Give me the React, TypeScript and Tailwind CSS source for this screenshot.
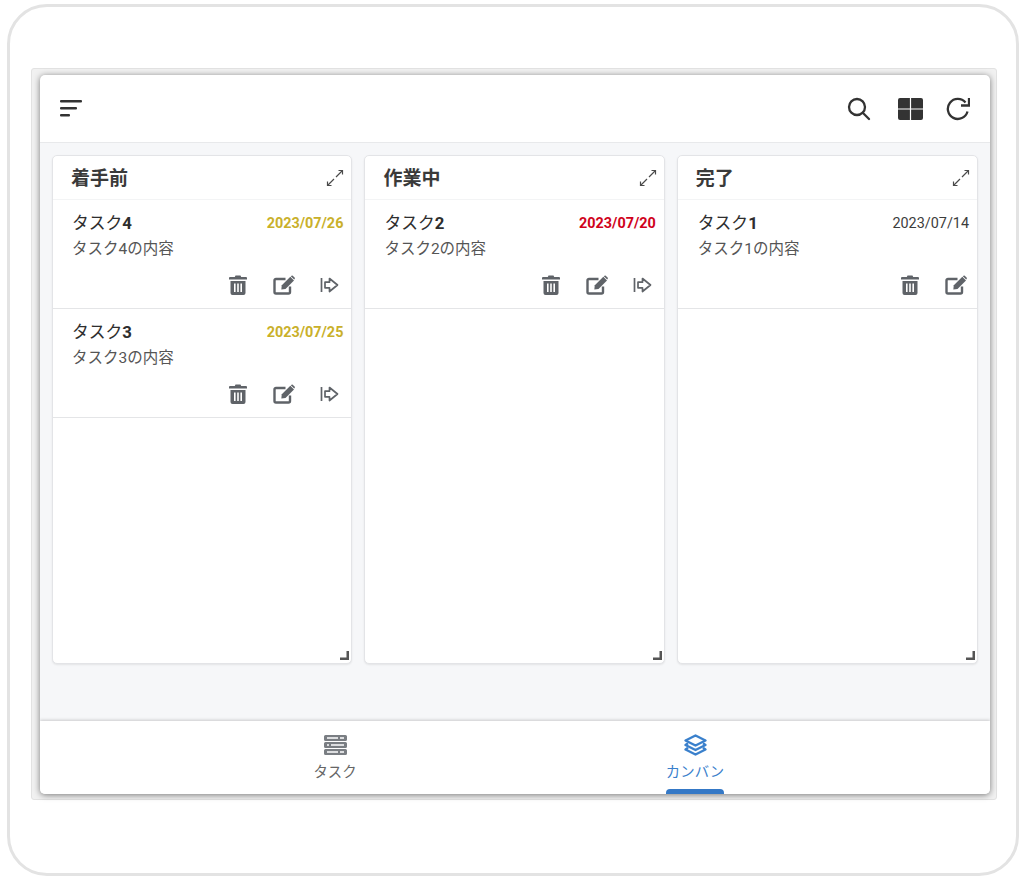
import React from 'react';

type Task = { title: string; body: string; date: string; dateClass: string };

const columns: { title: string; last?: boolean; tasks: Task[] }[] = [
  {
    title: '着手前',
    tasks: [
      { title: 'タスク4', body: 'タスク4の内容', date: '2023/07/26', dateClass: 'text-[#c9b02a] font-bold' },
      { title: 'タスク3', body: 'タスク3の内容', date: '2023/07/25', dateClass: 'text-[#c9b02a] font-bold' },
    ],
  },
  {
    title: '作業中',
    tasks: [{ title: 'タスク2', body: 'タスク2の内容', date: '2023/07/20', dateClass: 'text-[#d0021b] font-bold' }],
  },
  {
    title: '完了',
    last: true,
    tasks: [{ title: 'タスク1', body: 'タスク1の内容', date: '2023/07/14', dateClass: 'text-[#3c3c3c]' }],
  },
];

const ExpandIcon = () => (
  <svg width="18" height="18" viewBox="0 0 18 18" fill="none" stroke="#4a4a4a" strokeWidth="1.200">
    <path d="M1.500 16.500 8 10M10 8 16.500 1.500" />
    <path d="M12.500 1.500H16.500V5.500M1.500 12.500V16.500H5.500" />
  </svg>
);

const TrashIcon = () => (
  <svg width="18" height="20" viewBox="0 0 18 20" fill="#5f6368">
    <path d="M6.500 0.500h5l.7 1.500H17a1 1 0 0 1 1 1V4.500H0V3a1 1 0 0 1 1-1h4.800z" />
    <path fillRule="evenodd" d="M1.500 6h15v12a2 2 0 0 1-2 2h-11a2 2 0 0 1-2-2zM5 8.500v8.500h1.600V8.500zM8.200 8.500v8.500h1.600V8.500zM11.400 8.500v8.500H13V8.500z" />
  </svg>
);

const EditIcon = () => (
  <svg width="23" height="20" viewBox="0 0 23 20" fill="none">
    <path d="M17 11.500V17a1.500 1.500 0 0 1-1.500 1.500H3A1.500 1.500 0 0 1 1.500 17V5.500A1.500 1.500 0 0 1 3 4h9.500" stroke="#5f6368" strokeWidth="2.400" />
    <path d="M17.300 1.800 21 5.400 12.500 13.900 8.300 14.500 8.800 10.200z" fill="#5f6368" />
    <path d="M18.500 0.800 19.500 0.500 21.800 2.800 21.800 3.800 21.200 4.400 17.800 1.200z" fill="#5f6368" />
  </svg>
);

const MoveIcon = () => (
  <svg width="20" height="16" viewBox="0 0 20 16" fill="none" stroke="#5f6368">
    <path d="M1.500 1V15" strokeWidth="1.700" />
    <path d="M5 5.200h4.500V1.500L17.500 8l-8 6.500v-3.700H5z" strokeWidth="1.700" strokeLinejoin="round" />
  </svg>
);

const SortIcon = () => (
  <svg width="22" height="17" viewBox="0 0 22 17" fill="#333">
    <rect x="0" y="0" width="22" height="2.500" rx="1" />
    <rect x="0" y="7" width="17" height="2.500" rx="1" />
    <rect x="0" y="14" width="10" height="2.500" rx="1" />
  </svg>
);

const SearchIcon = () => (
  <svg width="24" height="24" viewBox="0 0 24 24" fill="none" stroke="#333" strokeWidth="2.300" strokeLinecap="round">
    <circle cx="10" cy="10" r="8" />
    <path d="M16 16l6 6" />
  </svg>
);

const GridIcon = () => (
  <svg width="25" height="22" viewBox="0 0 25 22" fill="#333">
    <path d="M2 0h9.900v10.400H0V2a2 2 0 0 1 2-2zM13.100 0H23a2 2 0 0 1 2 2v8.400H13.100zM0 11.600h11.900V22H2a2 2 0 0 1-2-2zM13.100 11.600H25V20a2 2 0 0 1-2 2h-9.900z" />
  </svg>
);

const RefreshIcon = () => (
  <svg width="24" height="24" viewBox="0 0 24 24" fill="none" stroke="#333" strokeWidth="2.300">
    <path d="M21.500 14.500A10 10 0 1 1 19.500 5.500" />
    <path d="M23 1v7.500h-8" />
  </svg>
);

const ServerIcon = () => (
  <svg width="23" height="20" viewBox="0 0 23 20" fill="#7a7e83">
    <path fillRule="evenodd" d="M1.500 0h20A1.500 1.500 0 0 1 23 1.500v3A1.500 1.500 0 0 1 21.500 6h-20A1.500 1.500 0 0 1 0 4.500v-3A1.500 1.500 0 0 1 1.500 0zM3 2.300v1.400h11V2.300zM16 2.300v1.400h4V2.300z" />
    <path fillRule="evenodd" d="M1.500 7h20A1.500 1.500 0 0 1 23 8.500v3a1.500 1.500 0 0 1-1.500 1.500h-20A1.500 1.500 0 0 1 0 11.500v-3A1.500 1.500 0 0 1 1.500 7zM3 9.300v1.400h2V9.300zM7 9.300v1.400h13V9.300z" />
    <path fillRule="evenodd" d="M1.500 14h20a1.500 1.500 0 0 1 1.500 1.500v3a1.500 1.500 0 0 1-1.500 1.500h-20A1.500 1.500 0 0 1 0 18.500v-3A1.500 1.500 0 0 1 1.500 14zM3 16.300v1.400h11v-1.400zM16 16.300v1.400h4v-1.400z" />
  </svg>
);

const LayersIcon = () => (
  <svg width="23" height="22" viewBox="0 0 23 22" fill="none" stroke="#3a80cc" strokeWidth="2.300" strokeLinejoin="round">
    <path d="M11.500 1.500 21.500 6.500 11.500 11.500 1.500 6.500z" />
    <path d="M4 9.300 1.500 11 11.500 16 21.500 11 19 9.300" />
    <path d="M4 13.800 1.500 15.500 11.500 20.500 21.500 15.500 19 13.800" />
  </svg>
);

function TaskRow({ task, last }: { task: Task; last?: boolean }) {
  return (
    <div className={`h-[109px] border-b border-[#e4e5e7] pr-[8px] pt-[13px] ${last ? 'pl-[20px]' : 'pl-[19px]'}`}>
      <div className="flex items-center justify-between h-[22px]">
        <span className="text-[16.800px] text-[#2e2e2e]">
          {task.title.slice(0, -1)}
          <span className="font-bold">{task.title.slice(-1)}</span>
        </span>
        <span className={`text-[14.400px] ${task.dateClass}`}>{task.date}</span>
      </div>
      <div className="mt-[3px] text-[15.500px] leading-[22px] text-[#555]">{task.body}</div>
      <div className={`mt-[14px] flex items-center justify-end h-[22px] ${last ? 'pr-[1px]' : 'pr-[3px]'}`}>
        <TrashIcon />
        <span className="ml-[26px]"><EditIcon /></span>
        {!last && <span className="ml-[24px]"><MoveIcon /></span>}
      </div>
    </div>
  );
}

function Column({ title, tasks, last }: { title: string; tasks: Task[]; last?: boolean }) {
  return (
    <div className={`relative h-[509px] rounded-[5px] bg-white border border-[#e3e4e7] shadow-[0_1px_2px_rgba(0,0,0,0.08)] ${last ? 'flex-1' : 'w-[300.400px]'}`}>
      <div className="flex items-center justify-between h-[44px] pl-[18px] pr-[7px] border-b border-[#f3f4f5]">
        <span className="pt-[3px] text-[19px] font-bold text-[#3a3a3a]">{title}</span>
        <ExpandIcon />
      </div>
      {tasks.map((t) => (
        <TaskRow key={t.title} task={t} last={last} />
      ))}
      <svg className="absolute right-[2px] bottom-[3px]" width="9" height="9" viewBox="0 0 9 9" fill="#555">
        <path d="M6.500 0H9V9H0V6.500H6.500z" />
      </svg>
    </div>
  );
}

export default function App() {
  return (
    <div
      className="w-[1024px] h-[877px] bg-white pl-[7px] pt-[4px] pr-[5px] pb-[1px]"
      style={{ fontFamily: 'Roboto, "Noto Sans CJK JP", sans-serif' }}
    >
      <div className="h-full rounded-[40px] border-[3px] border-[#e3e3e3] pl-[21px] pr-[19px] pt-[61px]">
        <div className="w-[966px] h-[732px] rounded-[3px] border border-[#e2e2e2] pl-[8px] pt-[6px] pr-[6px] pb-[5px] bg-[#f1f1f1]">
          <div className="flex flex-col h-[719px] w-[950px] rounded-[5px] overflow-hidden bg-white shadow-[0_1px_6px_rgba(0,0,0,0.5)]">
            <header className="flex items-center justify-between h-[68px] shrink-0 pl-[20px] pr-[20px] border-b border-[#e8e9eb]">
              <SortIcon />
              <div className="flex items-center">
                <SearchIcon />
                <span className="ml-[27px]"><GridIcon /></span>
                <span className="ml-[23px]"><RefreshIcon /></span>
              </div>
            </header>
            <main className="flex-1 flex items-start gap-[12px] bg-[#f6f7f9] pl-[12px] pr-[12px] pt-[12px]">
              {columns.map((c) => (
                <Column key={c.title} title={c.title} tasks={c.tasks} last={c.last} />
              ))}
            </main>
            <nav className="relative flex h-[73px] shrink-0 bg-white shadow-[0_-1px_3px_rgba(0,0,0,0.18)]">
              <div className="flex flex-col items-center w-[360px] ml-[115px] pt-[14px]">
                <ServerIcon />
                <span className="mt-[8px] text-[14.400px] leading-[20px] text-[#666]">タスク</span>
              </div>
              <div className="relative flex flex-col items-center w-[360px] pt-[13px]">
                <LayersIcon />
                <span className="mt-[7px] text-[14.400px] leading-[20px] text-[#3a80cc]">カンバン</span>
                <span className="absolute bottom-0 h-[5px] w-[58px] rounded-t-[4px] bg-[#3478c6]" />
              </div>
            </nav>
          </div>
        </div>
      </div>
    </div>
  );
}
